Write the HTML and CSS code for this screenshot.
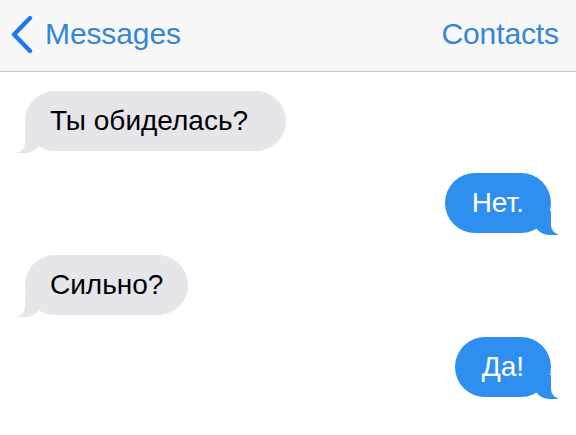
FILE: index.html
```html
<!DOCTYPE html>
<html lang="ru">
<head>
<meta charset="utf-8">
<title>Messages</title>
<link rel="stylesheet" href="styles.css">
</head>
<body>
  <header class="nav">
    <a class="nav-back" href="#">
      <svg class="chevron" width="22" height="40" viewBox="0 0 22 40" aria-hidden="true">
        <polyline points="19,3 3,19.5 19,36" fill="none" stroke="#1a7ceb" stroke-width="4.4" stroke-linecap="round" stroke-linejoin="round"/>
      </svg>
      <span>Messages</span>
    </a>
    <a class="nav-link" href="#">Contacts</a>
  </header>

  <main class="thread">
    <div class="msg msg-in msg-wide">Ты обиделась?</div>
    <div class="msg msg-out">Нет.</div>
    <div class="msg msg-in">Сильно?</div>
    <div class="msg msg-out">Да!</div>
  </main>
</body>
</html>
```

FILE: styles.css
```css
html, body {
  margin: 0;
  padding: 0;
  background: #ffffff;
}

body {
  width: 576px;
  height: 435px;
  overflow: hidden;
  font-family: "Liberation Sans", Arial, sans-serif;
}

/* top navigation bar */
.nav {
  height: 71px;
  background: #f7f7f7;
  border-bottom: 1px solid #c9c9cc;
  display: flex;
  align-items: center;
  justify-content: space-between;
  padding: 0 17px 4px 11px;
  box-sizing: border-box;
  height: 72px;
}

.nav a {
  color: #3486da;
  text-decoration: none;
  font-size: 30px;
  letter-spacing: -0.1px;
}

.nav-back {
  display: flex;
  align-items: center;
  gap: 12px;
}

.chevron {
  display: block;
  margin-top: 2px;
}

/* conversation */
.thread {
  display: flex;
  flex-direction: column;
  gap: 22px;
  padding: 19px 25px 0 25px;
}

.msg {
  position: relative;
  height: 60px;
  display: flex;
  align-items: center;
  border-radius: 30px;
  font-size: 28px;
  padding: 0 25px;
  box-sizing: border-box;
}

.msg-in {
  align-self: flex-start;
  background: #e5e5ea;
  color: #000000;
}

.msg-wide {
  padding-right: 38px;
}

.msg-out {
  align-self: flex-end;
  background: #2f8ff0;
  color: #ffffff;
  padding: 0 27px 0 27px;
}

/* bubble tails */
.msg::before,
.msg::after {
  content: "";
  position: absolute;
  bottom: -2px;
  height: 24px;
}

.msg-in::before {
  left: -8px;
  width: 24px;
  background: #e5e5ea;
  border-bottom-right-radius: 16px 14px;
}

.msg-in::after {
  left: -14px;
  width: 14px;
  background: #ffffff;
  border-bottom-right-radius: 10px;
}

.msg-out::before {
  right: -7px;
  width: 24px;
  background: #2f8ff0;
  border-bottom-left-radius: 16px 14px;
}

.msg-out::after {
  right: -13px;
  width: 13px;
  background: #ffffff;
  border-bottom-left-radius: 10px;
}
```
